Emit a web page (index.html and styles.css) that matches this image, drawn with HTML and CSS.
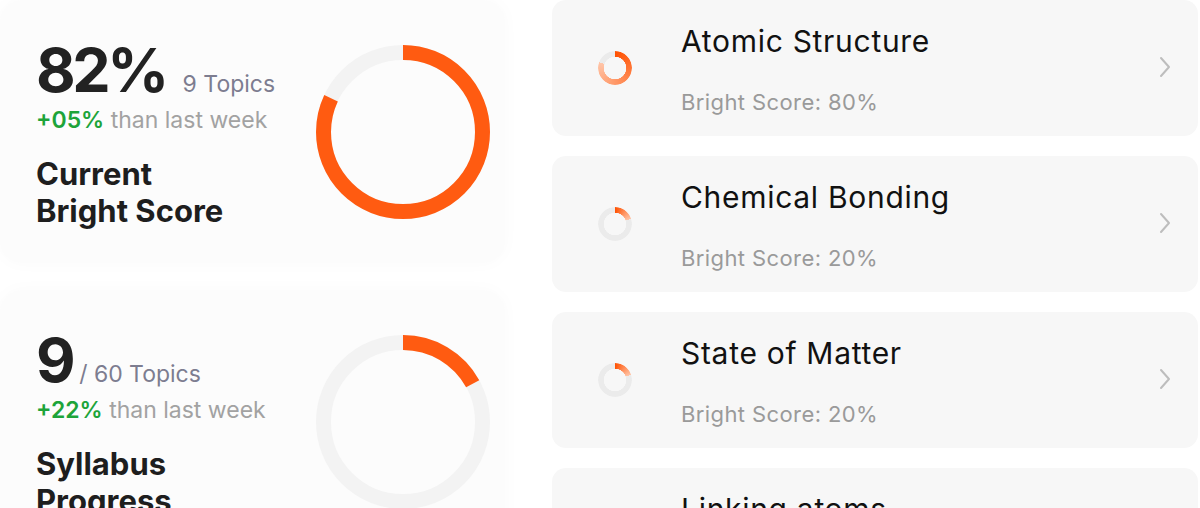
FILE: index.html
```html
<!DOCTYPE html>
<html>
<head>
    <title>Bright Score</title>
    <link rel="stylesheet" href="styles.css">
</head>
<body>
    <div class="page">
        <div class="stats">
            <div class="stat-card">
                <div class="stat-text">
                    <div class="stat-head">
                        <span class="stat-big">82%</span>
                        <span class="stat-sub">9 Topics</span>
                    </div>
                    <div class="stat-trend"><span class="up">+05%</span> than last week</div>
                    <div class="stat-title">Current<br>Bright Score</div>
                </div>
                <svg class="ring" width="174" height="174" viewBox="0 0 174 174">
                    <circle cx="87" cy="87" r="79.5" class="ring-track"/>
                    <circle cx="87" cy="87" r="79.5" class="ring-fill" pathLength="100" stroke-dasharray="82 100" transform="rotate(-90 87 87)"/>
                </svg>
            </div>
            <div class="stat-card">
                <div class="stat-text">
                    <div class="stat-head">
                        <span class="stat-big">9</span>
                        <span class="stat-sub slash">/ 60 Topics</span>
                    </div>
                    <div class="stat-trend"><span class="up">+22%</span> than last week</div>
                    <div class="stat-title">Syllabus<br>Progress</div>
                </div>
                <svg class="ring" width="174" height="174" viewBox="0 0 174 174">
                    <circle cx="87" cy="87" r="79.5" class="ring-track"/>
                    <circle cx="87" cy="87" r="79.5" class="ring-fill" pathLength="100" stroke-dasharray="17 100" transform="rotate(-90 87 87)"/>
                </svg>
            </div>
        </div>

        <div class="topics">
            <div class="topic">
                <div class="mini-ring p80"></div>
                <div class="topic-text">
                    <div class="topic-name">Atomic Structure</div>
                    <div class="topic-score">Bright Score: 80%</div>
                </div>
                <svg class="chev" width="14" height="24" viewBox="0 0 14 24"><polyline points="3,3 11,12 3,21"/></svg>
            </div>
            <div class="topic">
                <div class="mini-ring p20"></div>
                <div class="topic-text">
                    <div class="topic-name">Chemical Bonding</div>
                    <div class="topic-score">Bright Score: 20%</div>
                </div>
                <svg class="chev" width="14" height="24" viewBox="0 0 14 24"><polyline points="3,3 11,12 3,21"/></svg>
            </div>
            <div class="topic">
                <div class="mini-ring p20"></div>
                <div class="topic-text">
                    <div class="topic-name">State of Matter</div>
                    <div class="topic-score">Bright Score: 20%</div>
                </div>
                <svg class="chev" width="14" height="24" viewBox="0 0 14 24"><polyline points="3,3 11,12 3,21"/></svg>
            </div>
            <div class="topic">
                <div class="mini-ring p20"></div>
                <div class="topic-text">
                    <div class="topic-name">Linking atoms</div>
                    <div class="topic-score">Bright Score: 20%</div>
                </div>
                <svg class="chev" width="14" height="24" viewBox="0 0 14 24"><polyline points="3,3 11,12 3,21"/></svg>
            </div>
        </div>
    </div>
</body>
</html>
```

FILE: styles.css
```css
body {
    margin: 0;
    background-color: #fff;
    font-family: Inter, "Noto Sans", sans-serif;
    color: #1c1c1c;
    overflow: hidden;
}

.page {
    display: grid;
    grid-template-columns: 505px 646px;
    column-gap: 47px;
    height: 508px;
}

/* left column */

.stats {
    display: flex;
    flex-direction: column;
    gap: 27px;
}

.stat-card {
    flex: 0 0 263px;
    display: flex;
    align-items: center;
    justify-content: space-between;
    padding: 0 15px 0 36px;
    background-color: #fcfcfc;
    border-radius: 22px;
    box-shadow: 0 0 18px rgba(0, 0, 0, 0.025);
}

.stat-text {
    margin-top: 2px;
}

.stat-head {
    display: flex;
    align-items: baseline;
    gap: 17px;
}

.stat-big {
    font-size: 61px;
    font-weight: 700;
    line-height: 66px;
    letter-spacing: -3.5px;
    color: #222;
}

.stat-sub {
    font-size: 23px;
    color: #7d7d90;
}

.stat-sub.slash {
    margin-left: -10px;
}

.stat-trend {
    margin-top: 2px;
    font-size: 23px;
    line-height: 30px;
    color: #a2a2a2;
}

.up {
    color: #1da43a;
    font-weight: 600;
}

.stat-title {
    margin-top: 20px;
    font-size: 31px;
    line-height: 37px;
    font-weight: 700;
    color: #1e1e1e;
}

.ring {
    display: block;
}

.ring-track {
    fill: none;
    stroke: #f3f3f3;
    stroke-width: 15;
}

.ring-fill {
    fill: none;
    stroke: #ff5b11;
    stroke-width: 15;
}

/* right column */

.topics {
    display: flex;
    flex-direction: column;
    gap: 20px;
}

.topic {
    flex: 0 0 136px;
    display: flex;
    align-items: center;
    padding: 0 26px 0 46px;
    background-color: #f7f7f7;
    border-radius: 14px;
}

.mini-ring {
    width: 34px;
    height: 34px;
    border-radius: 50%;
    -webkit-mask: radial-gradient(circle, transparent 11px, #000 11.5px);
    mask: radial-gradient(circle, transparent 11px, #000 11.5px);
}

.mini-ring.p80 {
    background: conic-gradient(#ff5000 0deg, #ffc5a8 290deg, #ebebeb 290deg);
}

.mini-ring.p20 {
    background: conic-gradient(#ff5000 0deg, #ffc5a8 72deg, #ebebeb 72deg);
}

.topic-text {
    flex: 1;
    margin-left: 49px;
    margin-top: 2px;
}

.topic-name {
    font-size: 30px;
    line-height: 36px;
    letter-spacing: 0.7px;
    color: #111;
}

.topic-score {
    margin-top: 30px;
    font-size: 22px;
    line-height: 26px;
    letter-spacing: 0.4px;
    color: #9a9a9a;
}

.chev {
    display: block;
    margin-top: -2px;
}

.chev polyline {
    fill: none;
    stroke: #bdbdbd;
    stroke-width: 2;
    stroke-linecap: round;
    stroke-linejoin: round;
}
```
